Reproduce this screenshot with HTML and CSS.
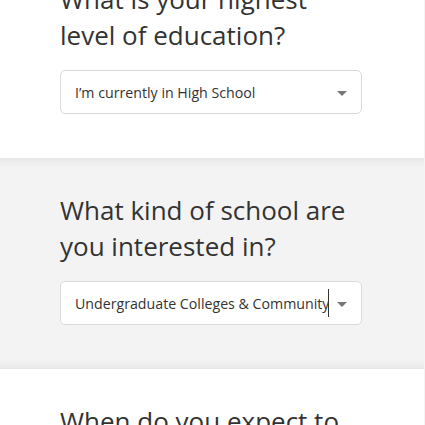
FILE: index.html
```html
<!DOCTYPE html>
<html>
<head>
<meta charset="utf-8">
<link rel="stylesheet" href="styles.css">
</head>
<body>
<div class="page">
  <section class="step">
    <div class="inner">
      <h2 class="q">What is your highest level of education?</h2>
      <div class="select">
        <span class="value">I’m currently in High School</span>
        <span class="arrow"></span>
      </div>
    </div>
  </section>
  <section class="step active">
    <div class="inner">
      <h2 class="q">What kind of school are you interested in?</h2>
      <div class="select">
        <span class="value clip">Undergraduate Colleges &amp; Community Colleges</span>
        <span class="caret"></span>
        <span class="arrow"></span>
      </div>
    </div>
  </section>
  <section class="step">
    <div class="inner">
      <h2 class="q">When do you expect to start school?</h2>
    </div>
  </section>
</div>
</body>
</html>
```
FILE: styles.css
```css
html, body {
  margin: 0;
  padding: 0;
  background: #ffffff;
  overflow: hidden;
}
body {
  font-family: "Open Sans", "Liberation Sans", sans-serif;
  color: #333333;
}
.page {
  margin-top: -53px;
  border-right: 1px solid #f4f4f4;
}
.step {
  background: #ffffff;
  padding: 34px 0 44px;
}
.step.active {
  background: #f3f3f3;
  box-shadow: inset 0 12px 10px -10px rgba(0, 0, 0, 0.07), inset 0 -12px 10px -10px rgba(0, 0, 0, 0.07);
}
.inner {
  margin-left: 60px;
  width: 302px;
}
.q {
  margin: 0;
  font-size: 26px;
  line-height: 36px;
  font-weight: 400;
  color: #333333;
  width: 300px;
}
.select {
  margin-top: 17px;
  height: 44px;
  box-sizing: border-box;
  border: 1px solid #dadada;
  border-radius: 5px;
  background: #ffffff;
  display: flex;
  align-items: center;
  padding-left: 14px;
  position: relative;
  font-size: 14.2px;
  color: #333333;
}
.value {
  white-space: nowrap;
}
.value.clip {
  overflow: hidden;
  width: 253px;
}
.caret {
  width: 1px;
  height: 28px;
  background: #333333;
  flex: none;
}
.arrow {
  position: absolute;
  right: 14px;
  top: 20px;
  width: 0;
  height: 0;
  border-left: 5px solid transparent;
  border-right: 5px solid transparent;
  border-top: 5px solid #777777;
}
```
